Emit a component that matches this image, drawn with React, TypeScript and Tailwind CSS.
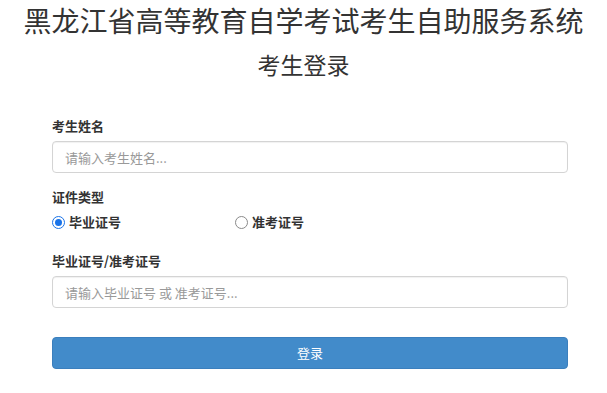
const Radio = ({ checked, label }: { checked?: boolean; label: string }) => (
  <label className="flex items-center gap-[4px] cursor-pointer">
    {checked ? (
      <span className="w-[13px] h-[13px] rounded-full border-[1.5px] border-[#1a73e8] flex items-center justify-center">
        <span className="w-[7px] h-[7px] rounded-full bg-[#1a73e8]" />
      </span>
    ) : (
      <span className="w-[13px] h-[13px] rounded-full border border-[#8a8a8a] bg-white" />
    )}
    <span className="text-[13px] font-bold text-[#333]">{label}</span>
  </label>
);

const Field = ({ placeholder }: { placeholder: string }) => (
  <input
    type="text"
    placeholder={placeholder}
    className="w-full h-[32px] px-[12px] text-[13px] text-[#555] placeholder:text-[#999] border border-[#d4d4d4] rounded-[4px] shadow-[inset_0_1px_1px_rgba(0,0,0,0.06)] outline-none"
  />
);

const App = () => {
  return (
    <div
      className="min-h-screen bg-white text-[#333]"
      style={{ fontFamily: '"Noto Sans CJK SC", "Noto Sans", sans-serif' }}
    >
      <h1 className="h-[40px] text-center text-[28px] leading-[40px] font-normal">
        黑龙江省高等教育自学考试考生自助服务系统
      </h1>
      <h2 className="mt-[9px] text-center text-[23px] leading-[30px] font-normal">
        考生登录
      </h2>

      <form className="ml-[52px] w-[516px]">
        <div className="mt-[38px] text-[13px] leading-[18px] font-bold">考生姓名</div>
        <div className="mt-[6px]">
          <Field placeholder="请输入考生姓名..." />
        </div>

        <div className="mt-[15px] text-[13px] leading-[18px] font-bold">证件类型</div>
        <div className="mt-[6px] h-[20px] flex items-center">
          <div className="w-[183px]">
            <Radio checked label="毕业证号" />
          </div>
          <Radio label="准考证号" />
        </div>

        <div className="mt-[20px] text-[13px] leading-[18px] font-bold">毕业证号/准考证号</div>
        <div className="mt-[6px]">
          <Field placeholder="请输入毕业证号 或 准考证号..." />
        </div>

        <button
          type="button"
          className="mt-[29px] w-full h-[32px] rounded-[4px] bg-[#428bca] border border-[#3b7fbd] text-white text-[13px]"
        >
          登录
        </button>
      </form>
    </div>
  );
};

export default App;
